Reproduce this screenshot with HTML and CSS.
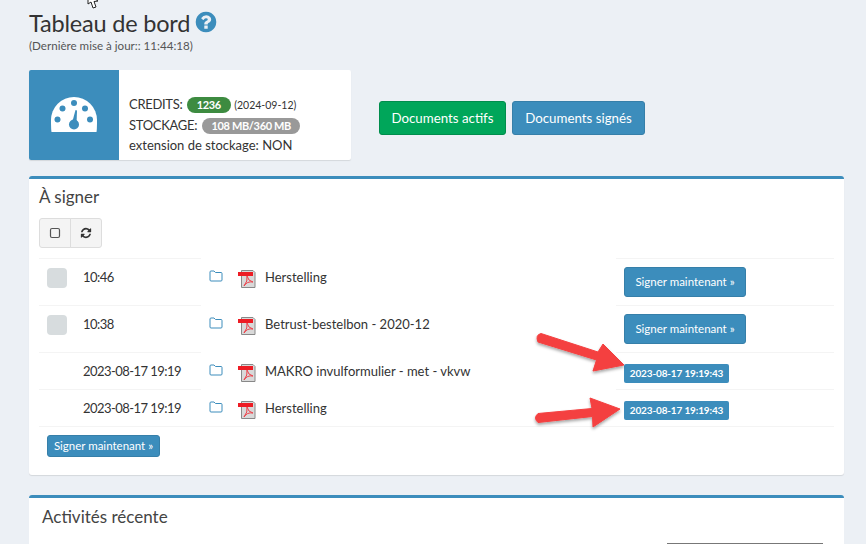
FILE: index.html
```html
<!DOCTYPE html>
<html lang="fr">
<head>
<meta charset="utf-8">
<title>Tableau de bord</title>
<link rel="stylesheet" href="styles.css">
</head>
<body>
<svg class="cursor" width="14" height="10" viewBox="0 0 14 10"><path d="M1 -6 L1 4 L4 2 L6 8 L9 7 L7 1.500 L11 1 Z" fill="#fff" stroke="#222" stroke-width="1"/></svg>
<main class="page">
  <header class="head">
    <h1 class="title">Tableau de bord
      <svg class="help" viewBox="0 0 1792 1792"><path fill="#3c8dbc" d="M1024 1376v-192q0-14-9-23t-23-9h-192q-14 0-23 9t-9 23v192q0 14 9 23t23 9h192q14 0 23-9t9-23zm256-672q0-88-55.500-163t-138.500-116-170-41q-243 0-371 213-15 24 8 42l132 100q7 6 19 6 16 0 25-12 53-68 86-92 34-24 86-24 48 0 85.500 26t37.500 59q0 38-20 61t-68 45q-63 28-115.500 86.500t-52.500 125.500v36q0 14 9 23t23 9h192q14 0 23-9t9-23q0-19 21.500-49.500t54.500-49.500q32-18 49-28.500t46-35 44.500-48 28-60.500 12.500-81zm384 192q0 209-103 385.500t-279.500 279.500-385.500 103-385.500-103-279.500-279.500-103-385.500 103-385.500 279.500-279.500 385.500-103 385.500 103 279.500 279.500 103 385.500z"/></svg>
    </h1>
    <p class="updated">(Dernière mise à jour:: 11:44:18)</p>
  </header>

  <section class="top">
    <div class="info">
      <div class="info-icon">
        <svg width="46" height="38" viewBox="0 0 46 38">
          <path fill="#fff" d="M0.500 36 Q0 33 0 24 A23 23 0 0 1 46 24 Q46 33 45.500 36 Z"/>
          <g fill="#3c8dbc">
            <circle cx="11.500" cy="12.500" r="3"/><circle cx="23" cy="7" r="3"/><circle cx="34" cy="12.500" r="3"/>
            <circle cx="6.500" cy="23.500" r="3"/><circle cx="39" cy="23.500" r="3"/>
            <circle cx="23" cy="28.500" r="5"/><path d="M21 27 L24.500 14 L26 14.500 L25.500 28 Z"/>
          </g>
        </svg>
      </div>
      <div class="info-text">
        <div><span class="label">CREDITS:</span> <span class="pill pill-green">1236</span> <small class="date">(2024-09-12)</small></div>
        <div><span class="label">STOCKAGE:</span> <span class="pill pill-gray">108 MB/360 MB</span></div>
        <div>extension de stockage: NON</div>
      </div>
    </div>
    <div class="top-actions">
      <a class="btn btn-green btn-lg">Documents actifs</a>
      <a class="btn btn-blue btn-lg">Documents signés</a>
    </div>
  </section>

  <section class="box box-sign">
    <h2 class="box-title">À signer</h2>
    <div class="tools">
      <button class="tool"><svg width="12" height="12" viewBox="0 0 12 12"><rect x="1.500" y="1.500" width="9" height="9" rx="1.500" fill="none" stroke="#555" stroke-width="1.200"/></svg></button>
      <button class="tool"><svg width="12" height="12" viewBox="0 0 1792 1792"><path fill="#333" d="M1639 1056q0 5-1 7-64 268-268 434.500t-478 166.500q-146 0-282.500-55t-243.500-157l-129 129q-19 19-45 19t-45-19-19-45v-448q0-26 19-45t45-19h448q26 0 45 19t19 45-19 45l-137 137q71 66 161 102t187 36q134 0 250-65t186-179q11-17 53-117 8-23 30-23h192q13 0 22.500 9.500t9.500 22.500zm25-800v448q0 26-19 45t-45 19h-448q-26 0-45-19t-19-45 19-45l138-138q-148-137-349-137-134 0-250 65t-186 179q-11 17-53 117-8 23-30 23h-199q-13 0-22.500-9.500t-9.500-22.500v-7q65-268 270-434.500t480-166.500q146 0 284 55.500t245 156.500l130-129q19-19 45-19t45 19 19 45z"/></svg></button>
    </div>
    <table class="docs">
      <colgroup><col class="c1"><col class="c2"><col class="c3"><col class="c4"><col class="c5"><col class="c6"></colgroup>
      <tr>
        <td class="line"><span class="check"></span></td><td class="line time">10:46</td>
        <td><svg class="folder" viewBox="0 0 14 12"><path d="M1 2 Q1 1 2 1 H5 L6.500 2.500 H12 Q13 2.500 13 3.500 V10 Q13 11 12 11 H2 Q1 11 1 10 Z"/></svg></td>
        <td><svg class="pdf" viewBox="0 0 18 18"><use href="#pdf-icon"/></svg></td>
        <td>Herstelling</td>
        <td class="line"><a class="btn btn-blue btn-md">Signer maintenant »</a></td>
      </tr>
      <tr>
        <td class="line"><span class="check"></span></td><td class="line time">10:38</td>
        <td><svg class="folder" viewBox="0 0 14 12"><path d="M1 2 Q1 1 2 1 H5 L6.500 2.500 H12 Q13 2.500 13 3.500 V10 Q13 11 12 11 H2 Q1 11 1 10 Z"/></svg></td>
        <td><svg class="pdf" viewBox="0 0 18 18"><use href="#pdf-icon"/></svg></td>
        <td>Betrust-bestelbon - 2020-12</td>
        <td class="line"><a class="btn btn-blue btn-md">Signer maintenant »</a></td>
      </tr>
      <tr>
        <td class="line"></td><td class="line time">2023-08-17 19:19</td>
        <td><svg class="folder" viewBox="0 0 14 12"><path d="M1 2 Q1 1 2 1 H5 L6.500 2.500 H12 Q13 2.500 13 3.500 V10 Q13 11 12 11 H2 Q1 11 1 10 Z"/></svg></td>
        <td><svg class="pdf" viewBox="0 0 18 18"><use href="#pdf-icon"/></svg></td>
        <td>MAKRO invulformulier - met - vkvw</td>
        <td class="line stamp-cell"><span class="stamp">2023-08-17 19:19:43</span></td>
      </tr>
      <tr class="last">
        <td class="line"></td><td class="line time">2023-08-17 19:19</td>
        <td><svg class="folder" viewBox="0 0 14 12"><path d="M1 2 Q1 1 2 1 H5 L6.500 2.500 H12 Q13 2.500 13 3.500 V10 Q13 11 12 11 H2 Q1 11 1 10 Z"/></svg></td>
        <td><svg class="pdf" viewBox="0 0 18 18"><use href="#pdf-icon"/></svg></td>
        <td>Herstelling</td>
        <td class="line stamp-cell"><span class="stamp">2023-08-17 19:19:43</span></td>
      </tr>
    </table>
    <a class="btn btn-blue btn-sm">Signer maintenant »</a>
  </section>

  <section class="box box-recent">
    <h2 class="box-title recent-title">Activités récente</h2>
    <div class="search"></div>
  </section>
</main>

<svg class="arrows" width="866" height="544" viewBox="0 0 866 544">
  <defs>
    <filter id="sh" x="-20%" y="-20%" width="140%" height="140%"><feDropShadow dx="0" dy="2" stdDeviation="1.500" flood-color="#000" flood-opacity=".35"/></filter>
    <symbol id="pdf-icon" viewBox="0 0 18 18">
      <path d="M3.500 0.500 H15 L17 2.500 V17.500 H3.500 Z" fill="#d9d9d9" stroke="#888" stroke-width="1"/>
      <path d="M0 2 H15 V6 H0 Z" fill="#ed1c24"/>
      <path d="M9 6 Q10 11 6 16 Q9 11 15 12 Q10 11 9 6" fill="none" stroke="#ed4049" stroke-width="1"/>
    </symbol>
  </defs>
  <g fill="#f44040" stroke="#f44040" stroke-linejoin="round" filter="url(#sh)">
    <path d="M541 333.500 L598 352 L603 344 L624 365 L593 371 L596.500 360 L538 342 Q535 335 541 333.500 Z" stroke-width="1"/>
    <path d="M538 413.500 L592 408.500 L590 398 L620 409 L593 427 L592.500 416.500 L538 422.500 Q533 418 538 413.500 Z" stroke-width="1"/>
  </g>
</svg>
</body>
</html>
```

FILE: styles.css
```css
* { box-sizing: border-box; }
html, body { margin: 0; height: 544px; overflow: hidden; }
body {
  background: #ecf0f5;
  color: #333;
  font-family: "Lato", "Noto Sans", sans-serif;
  font-size: 13px;
  line-height: 20px;
  position: relative;
}
.cursor { position: absolute; left: 87px; top: 0; }
.arrows { position: absolute; left: 0; top: 0; pointer-events: none; }
.page { padding: 0 22px 0 29px; }

.head { height: 70px; padding-top: 9px; }
.title { margin: 0; font-size: 23.500px; font-weight: 400; line-height: 28px; letter-spacing: -.2px; display: flex; align-items: center; gap: 4px; }
.help { width: 24px; height: 24px; margin-top: -2px; }
.updated { margin: 2px 0 0; font-size: 11.600px; line-height: 14px; color: #555; }

.top { display: flex; align-items: flex-start; gap: 28px; height: 90px; margin-bottom: 16px; }
.info { display: flex; width: 322px; height: 90px; background: #fff; border-radius: 2px; box-shadow: 0 1px 1px rgba(0,0,0,.1); overflow: hidden; }
.info-icon { width: 90px; background: #3c8dbc; display: flex; align-items: center; justify-content: center; }
.info-text { flex: 1; display: flex; flex-direction: column; justify-content: flex-end; padding: 0 0 5px 10px; }
.label { letter-spacing: -.3px; }
.date { font-size: 10.500px; }
.pill { display: inline-block; height: 16px; line-height: 16px; padding: 0 9px; border-radius: 8px; color: #fff; font-size: 11px; font-weight: 700; letter-spacing: -.35px; vertical-align: 0; }
.pill-green { background: #3d8b40; margin-left: 1px; padding: 0 10px; }
.pill-gray { background: #999; margin-left: 2px; }

.top-actions { display: flex; gap: 6px; margin-top: 31px; }
.btn { display: inline-block; color: #fff; border-radius: 3px; border: 1px solid transparent; text-align: center; white-space: nowrap; }
.btn-blue { background: #3c8dbc; border-color: #367fa9; }
.btn-green { background: #00a65a; border-color: #008d4c; }
.btn-lg { height: 34px; line-height: 32px; width: 127px; font-size: 13.300px; }
.btn-lg.btn-blue { width: 133px; }
.btn-md { height: 30px; line-height: 28px; width: 122px; font-size: 11.500px; }
.btn-sm { height: 22px; line-height: 20px; width: 113px; font-size: 11.500px; margin-left: 8px; }

.box { background: #fff; border-top: 3px solid #3c8dbc; border-radius: 3px; box-shadow: 0 1px 1px rgba(0,0,0,.1); }
.box-sign { height: 299px; padding: 0 10px; margin-bottom: 20px; }
.box-title { margin: 0; font-size: 17px; font-weight: 400; line-height: 20px; padding-top: 8px; color: #444; }
.tools { display: flex; margin-top: 11px; height: 30px; }
.tool { width: 32px; height: 30px; padding: 0; background: #f4f4f4; border: 1px solid #ddd; display: flex; align-items: center; justify-content: center; }
.tool:first-child { border-radius: 3px 0 0 3px; }
.tool:last-child { border-radius: 0 3px 3px 0; margin-left: -1px; }

.docs { border-collapse: separate; border-spacing: 0; table-layout: fixed; width: 795px; margin-top: 10px; margin-bottom: 8px; }
.c1 { width: 36px; } .c2 { width: 126px; } .c3 { width: 29px; } .c4 { width: 27px; } .c5 { width: 359px; } .c6 { width: 218px; }
.docs td { padding: 8px; vertical-align: top; border-top: 1px solid transparent; white-space: nowrap; }
.docs td.line { border-top-color: #f4f4f4; }
.docs td.time { letter-spacing: -.55px; }
.docs td.stamp-cell { padding: 11px 8px 6px; line-height: 19px; }
.docs .last td { border-bottom: 1px solid #f4f4f4; }
.check { display: block; width: 20px; height: 20px; margin-top: 1px; margin-bottom: -1px; background: #d7dcde; border-radius: 4px; }
.folder { display: block; width: 14px; height: 12px; margin-top: 3px; fill: #fff; stroke: #3c8dbc; stroke-width: 1; }
.pdf { display: block; width: 18px; height: 18px; margin: 3px 0 -1px 0; }
.stamp { display: block; width: 105px; height: 19px; line-height: 19px; text-align: center; background: #3c8dbc; color: #fff; border-radius: 2px; font-size: 10px; font-weight: 700; letter-spacing: -.15px; }

.box-recent { height: 49px; padding: 0 10px 0 13px; position: relative; border-radius: 3px 3px 0 0; box-shadow: none; }
.recent-title { padding-top: 9px; }
.search { position: absolute; left: 638px; top: 45px; width: 156px; height: 1px; background: #777; }
```
